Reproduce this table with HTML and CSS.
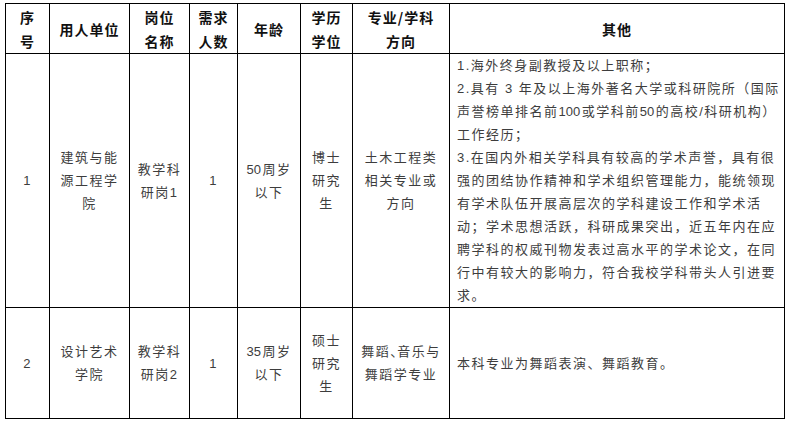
FILE: index.html
```html
<!DOCTYPE html>
<html lang="zh-CN">
<head>
<meta charset="utf-8">
<link rel="stylesheet" href="styles.css">
</head>
<body>
<table class="jobs">
  <colgroup>
    <col class="c1"><col class="c2"><col class="c3"><col class="c4"><col class="c5"><col class="c6"><col class="c7"><col class="c8">
  </colgroup>
  <thead>
    <tr class="head">
      <th>序<br>号</th>
      <th>用人单位</th>
      <th>岗位<br>名称</th>
      <th>需求<br>人数</th>
      <th>年龄</th>
      <th>学历<br>学位</th>
      <th>专业/学科<br>方向</th>
      <th>其他</th>
    </tr>
  </thead>
  <tbody>
    <tr class="r1">
      <td>1</td>
      <td>建筑与能<br>源工程学<br>院</td>
      <td>教学科<br>研岗1</td>
      <td>1</td>
      <td><span class="num">50</span>周岁<br>以下</td>
      <td>博士<br>研究<br>生</td>
      <td>土木工程类<br>相关专业或<br>方向</td>
      <td class="other">1.海外终身副教授及以上职称；<br>2.具有 3 年及以上海外著名大学或科研院所（国际<br>声誉榜单排名前<span class="num">100</span>或学科前<span class="num">50</span>的高校/科研机构）<br>工作经历；<br>3.在国内外相关学科具有较高的学术声誉，具有很<br>强的团结协作精神和学术组织管理能力，能统领现<br>有学术队伍开展高层次的学科建设工作和学术活<br>动；学术思想活跃，科研成果突出，近五年内在应<br>聘学科的权威刊物发表过高水平的学术论文，在同<br>行中有较大的影响力，符合我校学科带头人引进要<br>求。</td>
    </tr>
    <tr class="r2">
      <td>2</td>
      <td>设计艺术<br>学院</td>
      <td>教学科<br>研岗2</td>
      <td>1</td>
      <td><span class="num">35</span>周岁<br>以下</td>
      <td>硕士<br>研究<br>生</td>
      <td class="tight">舞蹈<span class="dun">、</span>音乐与<br>舞蹈学专业</td>
      <td class="other">本科专业为舞蹈表演、舞蹈教育。</td>
    </tr>
  </tbody>
</table>
</body>
</html>
```

FILE: styles.css
```css
html, body {
  margin: 0;
  padding: 0;
  background: #ffffff;
}

.jobs {
  margin: 3px 0 0 5px;
  border-collapse: collapse;
  table-layout: fixed;
  width: 779px;
  font-family: "Noto Sans CJK SC", "Noto Sans", sans-serif;
}

.c1 { width: 44px; }
.c2 { width: 80px; }
.c3 { width: 60px; }
.c4 { width: 48px; }
.c5 { width: 63px; }
.c6 { width: 52px; }
.c7 { width: 97px; }
.c8 { width: 335px; }

.jobs th,
.jobs td {
  border: 1px solid #000;
  padding: 0;
  text-align: center;
  vertical-align: middle;
}

.jobs th {
  font-size: 14px;
  font-weight: bold;
  color: #111;
  line-height: 24px;
  letter-spacing: 1px;
  height: 49px;
}

.jobs td {
  font-family: "Liberation Sans", "Noto Sans CJK SC", sans-serif;
  font-size: 13px;
  color: #3d3d3d;
  line-height: 23px;
  letter-spacing: 1.5px;
}

.jobs td.other {
  text-align: left;
  padding-left: 7px;
  white-space: nowrap;
}

.num {
  letter-spacing: 0;
  margin-right: 1.5px;
}

.r1 td {
  height: 253px;
}

.r2 td {
  height: 110px;
}

.tight {
  white-space: nowrap;
}

.dun {
  letter-spacing: -6px;
}
```
